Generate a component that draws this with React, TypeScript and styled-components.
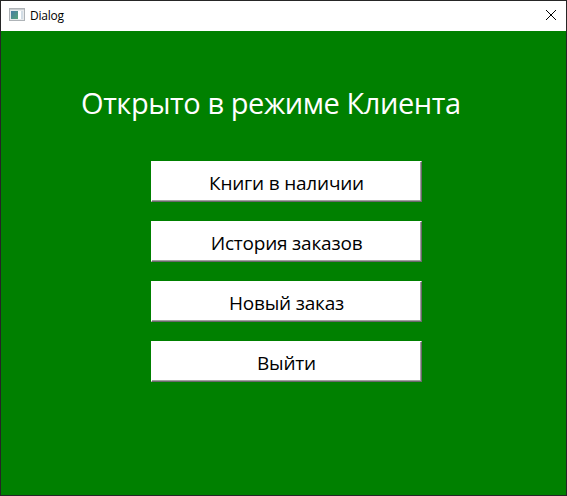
import React from 'react';
import styled, { createGlobalStyle } from 'styled-components';

const GlobalStyle = createGlobalStyle`
  * { box-sizing: border-box; }
  body { margin: 0; overflow: hidden; }
`;

const DialogWindow = styled.div`
  width: 567px;
  height: 496px;
  display: flex;
  flex-direction: column;
  border: 1px solid #262626;
  background: #008000;
  font-family: "Open Sans", "Noto Sans", sans-serif;
`;

const TitleBar = styled.header`
  height: 30px;
  flex: none;
  display: flex;
  align-items: center;
  padding: 0 9px 0 8px;
  background: #fff;
  color: #000;
`;

const AppIcon = styled.svg`
  margin-top: -2px;
`;

const Caption = styled.span`
  flex: 1;
  margin-left: 5px;
  font-size: 12px;
  line-height: 16px;
  letter-spacing: -0.25px;
`;

const CloseButton = styled.button`
  border: 0;
  padding: 0;
  margin: -2px 0 0;
  background: none;
  display: flex;
`;

const Content = styled.main`
  flex: 1;
  display: flex;
  flex-direction: column;
`;

const Heading = styled.h1`
  margin: 49px 0 0 80px;
  height: 46px;
  line-height: 46px;
  font-size: 29px;
  font-weight: 400;
  letter-spacing: -0.43px;
  color: #fff;
  white-space: nowrap;
`;

const Menu = styled.nav`
  display: grid;
  gap: 19px;
  width: 271px;
  margin: 35px 0 0 150px;
`;

const MenuButton = styled.button`
  height: 41px;
  padding: 3px 0 0;
  border: 1px solid;
  border-color: #fff #696969 #696969 #fff;
  box-shadow: inset -1px -1px #a0a0a0;
  background: #fff;
  color: #000;
  font-family: inherit;
  font-size: 19px;
  line-height: 26px;
  letter-spacing: -0.2px;
`;

const items = ['Книги в наличии', 'История заказов', 'Новый заказ', 'Выйти'];

export default function App() {
  return (
    <>
      <GlobalStyle />
      <DialogWindow>
        <TitleBar>
          <AppIcon width="16" height="14" viewBox="0 0 16 14">
            <defs>
              <linearGradient id="pane" x1="0" y1="0" x2="1" y2="1">
                <stop offset="0" stopColor="#477ba4" />
                <stop offset="1" stopColor="#58a579" />
              </linearGradient>
            </defs>
            <rect x="0.5" y="0.5" width="15" height="12" fill="#e8eaec" stroke="#aeb3b7" />
            <path d="M1 1.5H15" stroke="#c9cdd0" />
            <rect x="2" y="3" width="7" height="8" fill="url(#pane)" />
            <rect x="9" y="3" width="3" height="8" fill="#fff" />
            <rect x="12" y="3" width="2" height="8" fill="#d3dde5" />
          </AppIcon>
          <Caption>Dialog</Caption>
          <CloseButton aria-label="Close">
            <svg width="12" height="12" viewBox="0 0 12 12">
              <path d="M1 1L11 11M11 1L1 11" stroke="#000" fill="none" />
            </svg>
          </CloseButton>
        </TitleBar>
        <Content>
          <Heading>Открыто в режиме Клиента</Heading>
          <Menu>
            {items.map((item) => <MenuButton key={item}>{item}</MenuButton>)}
          </Menu>
        </Content>
      </DialogWindow>
    </>
  );
}
